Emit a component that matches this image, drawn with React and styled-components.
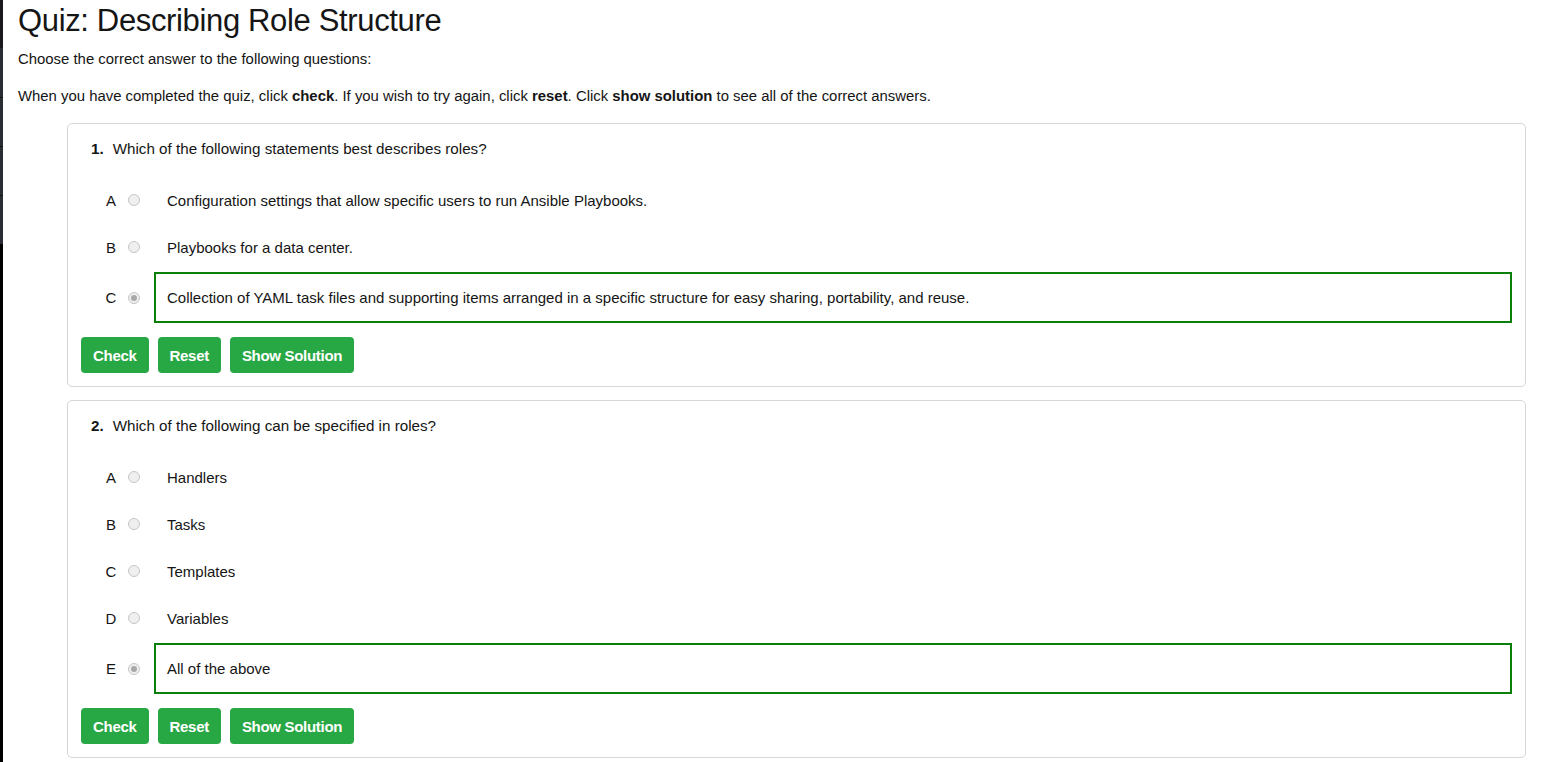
import React from 'react'
import styled, { createGlobalStyle, css } from 'styled-components'

const textBlack = '#151515'
const success = '#28a745'
const correctGreen = '#0a7f0a'

const questions = [
    {
        number: 1,
        text: 'Which of the following statements best describes roles?',
        options: [
            { letter: 'A', text: 'Configuration settings that allow specific users to run Ansible Playbooks.' },
            { letter: 'B', text: 'Playbooks for a data center.' },
            { letter: 'C', text: 'Collection of YAML task files and supporting items arranged in a specific structure for easy sharing, portability, and reuse.', correct: true }
        ]
    },
    {
        number: 2,
        text: 'Which of the following can be specified in roles?',
        options: [
            { letter: 'A', text: 'Handlers' },
            { letter: 'B', text: 'Tasks' },
            { letter: 'C', text: 'Templates' },
            { letter: 'D', text: 'Variables' },
            { letter: 'E', text: 'All of the above', correct: true }
        ]
    }
]

const App = () => {

    const renderOption = (option, i) => {
        return (
            <Option key={i} correct={option.correct}>
                <Letter>{option.letter}</Letter>
                <Radio checked={option.correct} />
                <Answer correct={option.correct}>{option.text}</Answer>
            </Option>
        )
    }

    const renderQuestion = (q, i) => {
        return (
            <Card key={i}>
                <Question>
                    <Number>{q.number}.</Number>
                    {q.text}
                </Question>

                <Options>
                    {q.options.map(renderOption)}
                </Options>

                <Buttons>
                    <Button>Check</Button>
                    <Button>Reset</Button>
                    <Button>Show Solution</Button>
                </Buttons>
            </Card>
        )
    }

    return (
        <Page>
            <GlobalStyle />

            <Sidebar>
                <SideTop />
                <SideItem />
                <SideItem />
                <SideItem />
                <SideItem />
                <SideRest />
            </Sidebar>

            <Main>
                <Title>Quiz: Describing Role Structure</Title>
                <Text>Choose the correct answer to the following questions:</Text>
                <Text>
                    When you have completed the quiz, click <b>check</b>. If you wish to try again,
                    click <b>reset</b>. Click <b>show solution</b> to see all of the correct answers.
                </Text>

                <Quiz>
                    {questions.map(renderQuestion)}
                </Quiz>
            </Main>
        </Page>
    )
}

const GlobalStyle = createGlobalStyle`
    * {
        box-sizing: border-box;
    }

    body {
        margin: 0;
        background: white;
        color: ${textBlack};
        font-family: 'Liberation Sans', Arial, sans-serif;
        font-size: 15px;
    }
`

const Page = styled.div`
    display: flex;
    min-height: 100vh;
`

// Sidebar edge

const Sidebar = styled.div`
    display: flex;
    flex-direction: column;
    width: 3px;
    flex: 0 0 3px;
    background: #000;
`

const SideTop = styled.div`
    height: 48px;
    background: #17191c;
`

const SideItem = styled.div`
    height: 49px;
    background: #2a2e34;
    border-top: 1px solid #111;

    &:nth-child(2) {
        border-top: none;
    }
`

const SideRest = styled.div`
    flex: 1;
    background: #000;
`

// Main

const Main = styled.div`
    flex: 1;
    padding: 0 17px 16px 15px;
`

const Title = styled.h1`
    margin: 2px 0 8px;
    font-family: 'Liberation Sans', Arial, sans-serif;
    font-size: 31px;
    font-weight: 400;
    line-height: 38px;
    letter-spacing: -0.35px;
    color: ${textBlack};
`

const Text = styled.p`
    margin: 0 0 15px;
    font-size: 14.9px;
    line-height: 22px;

    b {
        font-weight: 700;
    }
`

const Quiz = styled.div`
    display: flex;
    flex-direction: column;
    gap: 13px;
    margin: 16px 0 0 49px;
`

const Card = styled.div`
    border: 1px solid #d6d6d6;
    border-radius: 5px;
    padding: 15px 13px 13px;
`

const Question = styled.div`
    display: flex;
    align-items: center;
    padding-left: 10px;
    font-size: 15.2px;
    line-height: 20px;
`

const Number = styled.span`
    font-weight: 700;
    margin-right: 9px;
`

const Options = styled.div`
    display: flex;
    flex-direction: column;
    gap: 3px;
    margin-top: 19px;
`

const Option = styled.div`
    display: flex;
    align-items: center;
    height: 44px;
    padding-left: 24px;

    ${props => props.correct && css`
        height: 51px;
    `}
`

const Letter = styled.div`
    width: 12px;
    text-align: center;
    font-size: 15px;
`

const Radio = styled.span`
    position: relative;
    width: 12px;
    height: 12px;
    margin: 0 14px 0 11px;
    border-radius: 50%;
    border: 1px solid #c6c6c6;
    background: #efefef;

    ${props => props.checked && css`
        &::after {
            content: '';
            position: absolute;
            top: 2px;
            left: 2px;
            width: 6px;
            height: 6px;
            border-radius: 50%;
            background: #a8a8a8;
        }
    `}
`

const Answer = styled.div`
    flex: 1;
    display: flex;
    align-items: center;
    align-self: stretch;
    padding-left: 11px;
    font-size: 15px;
    border: 2px solid transparent;

    ${props => props.correct && css`
        border-color: ${correctGreen};
    `}
`

const Buttons = styled.div`
    display: flex;
    gap: 9px;
    margin-top: 14px;
`

const Button = styled.button`
    height: 36px;
    padding: 0 12px;
    border: none;
    border-radius: 4px;
    background: ${success};
    color: white;
    font-family: 'Liberation Sans', Arial, sans-serif;
    font-size: 15px;
    font-weight: 700;
    letter-spacing: -0.3px;
    cursor: pointer;
`

export default App
